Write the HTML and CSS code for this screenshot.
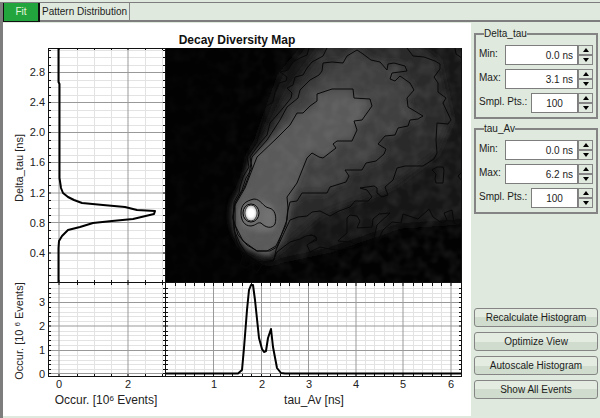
FILE: index.html
```html
<!DOCTYPE html>
<html lang="en">
<head>
<meta charset="utf-8">
<title>Decay Diversity Map</title>
<link rel="stylesheet" href="styles.css">
</head>
<body>
<div class="window">
  <nav class="tabs">
    <button class="tab tab-active" type="button">Fit</button>
    <button class="tab" type="button">Pattern Distribution</button>
  </nav>
  <div class="content">
    <main class="plot">
      <svg class="chart" viewBox="3 23 468 393" role="img" aria-label="Decay Diversity Map">
        <defs>
          <filter id="soft" x="-10%" y="-10%" width="120%" height="120%"><feGaussianBlur stdDeviation="4"/></filter>
          <filter id="softer" x="-20%" y="-20%" width="140%" height="140%"><feGaussianBlur stdDeviation="2"/></filter>
          <filter id="glow" x="-50%" y="-50%" width="200%" height="200%"><feGaussianBlur stdDeviation="1"/></filter>
          <filter id="mottle" x="0" y="0" width="100%" height="100%">
            <feTurbulence type="fractalNoise" baseFrequency="0.08" numOctaves="2" seed="4"/>
            <feColorMatrix values="0 0 0 0 1  0 0 0 0 1  0 0 0 0 1  0.5 0 0 0 -0.18"/>
          </filter>
          <linearGradient id="fade" x1="0" y1="0" x2="1" y2="0">
            <stop offset="0.15" stop-color="#fff" stop-opacity="0.1"/><stop offset="0.5" stop-color="#fff" stop-opacity="0.25"/><stop offset="1" stop-color="#fff" stop-opacity="0.35"/>
          </linearGradient>
          <mask id="noiseMask"><rect x="165" y="48" width="297" height="235" fill="url(#fade)"/></mask>
          <clipPath id="mapClip"><rect x="165" y="48" width="297" height="235"/></clipPath>
          <clipPath id="tickClip">
            <path d="M48 48h117v2h-117zM48 48h3v328h-3zM163 48h5v328h-5zM48 280h117v5h-117zM165 283h297v3h-297zM48 374h414v3h-414zM459 283h3v94h-3z"/>
          </clipPath>
          <path id="minor" d="M77.500 48V376M94.500 48V376M111.500 48V376M145.500 48V376M162.500 48V376
            M48 50.500H165M48 57.500H165M48 65.500H165M48 80.500H165M48 87.500H165M48 95.500H165M48 110.500H165M48 117.500H165M48 125.500H165M48 140.500H165M48 148.500H165M48 155.500H165M48 170.500H165M48 178.500H165M48 185.500H165M48 200.500H165M48 208.500H165M48 215.500H165M48 230.500H165M48 238.500H165M48 245.500H165M48 260.500H165M48 268.500H165M48 275.500H165
            M48 288.500H461M48 293.500H461M48 297.500H461M48 307.500H461M48 312.500H461M48 316.500H461M48 321.500H461M48 331.500H461M48 335.500H461M48 340.500H461M48 345.500H461M48 355.500H461M48 360.500H461M48 364.500H461M48 369.500H461
            M175.500 283V376M185.500 283V376M194.500 283V376M204.500 283V376M223.500 283V376M232.500 283V376M242.500 283V376M251.500 283V376M270.500 283V376M280.500 283V376M289.500 283V376M299.500 283V376M318.500 283V376M327.500 283V376M337.500 283V376M346.500 283V376M365.500 283V376M374.500 283V376M384.500 283V376M393.500 283V376M413.500 283V376M422.500 283V376M432.500 283V376M441.500 283V376"/>
          <path id="major" d="M59 48V376M128 48V376M48 72.500H165M48 102.500H165M48 132.500H165M48 162.500H165M48 193H165M48 222.500H165M48 253H165
            M48 302.500H461M48 326H461M48 350.500H461M48 373.500H461M213.500 283V376M261.500 283V376M308.500 283V376M356 283V376M403 283V376M451 283V376"/>
          <path id="cA" d="M309 48L307 55 300 58 293 62 288 70 280 72 287 77 286 81 279 83 275 92 273 102 265 107 263 120 260 130 257 142 247 157 249 167 243 177 240 187 239 193 234 202 233 217 234 230 237 242 243 257 240 265 246 268 253 263 253 270 257 273 263 263 273 261 277 252 290 242 300 239 306 236 312 235 317 238 307 245 310 252 320 247 335 250 353 247 355 244 351 242 338 241 341 238 347 233 347 218 350 215 357 216 360 221 357 228 372 227 373 219 379 214 390 213 377 225 374 238 378 240 383 230 392 222 401 223 403 214 418 219 429 209 433 217 442 223 447 220 444 213 452 210 454 223 458 225 462 223"/>
          <path id="cB" d="M327 48L323 56 312 62 307 68 303 75 295 77 293 85 287 88 292 93 291 98 283 108 277 115 270 123 267 135 260 143 250 157 252 168 246 178 242 190 235 203 233 217 235 232 240 244 248 256 252 260 262 262 274 260 276 250 283 235 290 220 298 217 307 216 312 212 320 211 330 216 339 211 350 207 355 201 368 201 372 197 367 190 360 188 374 186 377 188 377 193 382 197 388 195 385 187 393 180 397 168 405 166 423 166 434 159 437 153 436 140 437 123 448 124 451 120 443 103 446 98 438 92 438 83 434 77 440 69 440 64 435 61 424 57 413 56 407 48"/>
          <path id="cC" d="M319 75L322 71 323 63 332 62 343 63 347 56 357 50 363 54 371 60 380 62 387 70 388 64 394 63 405 66 407 71 392 73 390 79 395 81 400 76 410 83 414 90 407 98 408 107 423 116 418 119 410 120 408 126 398 128 395 135 385 136 378 144 386 149 384 154 376 161 366 163 362 170 345 170 349 176 346 182 330 187 327 193 302 193 297 201 290 202 288 210 287 220 282 233 277 247 270 251 257 251 247 245 238 235 233 218 235 203 244 188 249 175 252 157 267 140 280 120 287 107 298 98 300 90 310 80Z"/>
          <path id="cD" d="M317 101L317 94 332 89 353 89 354 98 370 99 372 106 362 120 354 121 357 130 352 141 337 141 333 144 336 148 323 158 319 157 312 153 307 158 297 183 287 197 288 208 286 225 276 246 267 251 257 251 243 241 235 225 235 205 245 188 257 157 277 138 290 125 297 113 303 113 310 106Z"/>
          <path id="cE" d="M241 213C241 205 245 201 254 199C261 199 263 207 269 208C275 209 277 217 275 224C272 229 266 228 261 223C257 222 257 225 251 226C244 226 241 220 241 213Z"/>
        </defs>

        <use href="#minor" class="grid-minor"/>
        <use href="#major" class="grid-major"/>
        <g clip-path="url(#tickClip)"><use href="#minor" class="tick"/><use href="#major" class="tick"/></g>

        <g clip-path="url(#mapClip)">
          <rect x="165" y="48" width="297" height="235" fill="#020202"/>
          <g filter="url(#soft)">
            <path d="M309 40L280 75 262 125 240 190 240 240 265 264 330 250 400 226 475 221V40Z" fill="#151515"/>
            <path d="M327 40L290 90 267 135 245 190 241 244 270 258 320 215 395 185 437 153 451 120 438 60 410 40Z" fill="#2a2a2a"/>
            <use href="#cC" fill="#404040"/>
          </g>
          <g filter="url(#softer)">
            <path d="M252 157L244 188 236 203 235 232 247 249 270 255 287 225 289 202 307 158 295 118Z" fill="#555"/>
          </g>
          <g filter="url(#soft)"><use href="#cD" fill="#5a5a5a"/></g>
          <g filter="url(#softer)"><path d="M239 210Q250 194 270 203Q281 218 273 231Q250 234 240 224Z" fill="#6c6c6c"/></g>
          <rect x="165" y="48" width="297" height="235" filter="url(#mottle)" mask="url(#noiseMask)"/>
          <g class="contour">
            <use href="#cA"/><use href="#cB"/><use href="#cC"/><use href="#cD"/><use href="#cE"/>
            <path d="M432 170L437 167 443 167 444 170 443 183 436 183 435 179 436 174ZM455 48L456 54 462 58M462 172L458 176 462 181M310 235L315 236 317 240 310 243"/>
          </g>
          <ellipse cx="251" cy="213" rx="8" ry="9" fill="#8a8a8a" stroke="#000"/>
          <ellipse cx="251" cy="213" rx="6" ry="8" fill="#bbb" stroke="#222"/>
          <ellipse cx="251" cy="213" rx="5" ry="6" fill="#fff" filter="url(#glow)"/>
        </g>

        <path class="axis" d="M48 48.500H165M48.500 48V377M48 282.500H462M165.500 48V377M48 376.500H462M461.500 48V377"/>
        <path class="curve" d="M58.500 48V82L59.500 84V178L61 188 63 193 68 197 74 200 82 203 103 205 125 207 137 210 155 211 154 214 133 219 112 221 93 223 80 227 68 230 62 236 59 241 58.500 248V282"/>
        <path class="curve" d="M166 373.500H238L242 370 244 348 247 310 249 290 251 285H253L255 300 259 338 262 349 264 352 266 351 268 338 271 329 273 347 277 368 281 373 285 373.500H461"/>

        <text class="title" x="237" y="44">Decay Diversity Map</text>
        <g class="label end">
          <text x="45" y="76">2.8</text><text x="45" y="106">2.4</text><text x="45" y="136">2.0</text><text x="45" y="166">1.6</text><text x="45" y="197">1.2</text><text x="45" y="227">0.8</text><text x="45" y="257">0.4</text>
          <text x="45" y="306">3</text><text x="45" y="330">2</text><text x="45" y="354">1</text><text x="45" y="378">0</text>
        </g>
        <g class="label middle">
          <text x="59" y="388">0</text><text x="128" y="388">2</text><text x="214" y="388">1</text><text x="262" y="388">2</text><text x="309" y="388">3</text><text x="356" y="388">4</text><text x="403" y="388">5</text><text x="451" y="388">6</text>
          <text class="axis-name" x="106" y="404">Occur. [10<tspan class="sup" dy="-3">6</tspan><tspan dy="3"> Events]</tspan></text>
          <text class="axis-name" x="314" y="404">tau_Av [ns]</text>
          <text transform="translate(23 168) rotate(-90)">Delta_tau [ns]</text>
          <text transform="translate(23 331) rotate(-90)">Occur. [10 <tspan class="sup" dy="-3">6</tspan><tspan dy="3"> Events]</tspan></text>
        </g>
      </svg>
    </main>
    <aside class="panel">
      <fieldset class="group">
        <legend>Delta_tau</legend>
        <div class="row"><label for="d-min">Min:</label><input id="d-min" type="text" value="0.0 ns"><span class="spin"><button type="button" aria-label="Increase"><svg viewBox="0 0 6 4"><path d="M0 4L3 0 6 4Z"/></svg></button><button type="button" aria-label="Decrease"><svg viewBox="0 0 6 4"><path d="M0 0L3 4 6 0Z"/></svg></button></span></div>
        <div class="row"><label for="d-max">Max:</label><input id="d-max" type="text" value="3.1 ns"><span class="spin"><button type="button" aria-label="Increase"><svg viewBox="0 0 6 4"><path d="M0 4L3 0 6 4Z"/></svg></button><button type="button" aria-label="Decrease"><svg viewBox="0 0 6 4"><path d="M0 0L3 4 6 0Z"/></svg></button></span></div>
        <div class="row row-points"><label for="d-pts">Smpl. Pts.:</label><input id="d-pts" type="text" value="100"><span class="spin"><button type="button" aria-label="Increase"><svg viewBox="0 0 6 4"><path d="M0 4L3 0 6 4Z"/></svg></button><button type="button" aria-label="Decrease"><svg viewBox="0 0 6 4"><path d="M0 0L3 4 6 0Z"/></svg></button></span></div>
      </fieldset>
      <fieldset class="group">
        <legend>tau_Av</legend>
        <div class="row"><label for="t-min">Min:</label><input id="t-min" type="text" value="0.0 ns"><span class="spin"><button type="button" aria-label="Increase"><svg viewBox="0 0 6 4"><path d="M0 4L3 0 6 4Z"/></svg></button><button type="button" aria-label="Decrease"><svg viewBox="0 0 6 4"><path d="M0 0L3 4 6 0Z"/></svg></button></span></div>
        <div class="row"><label for="t-max">Max:</label><input id="t-max" type="text" value="6.2 ns"><span class="spin"><button type="button" aria-label="Increase"><svg viewBox="0 0 6 4"><path d="M0 4L3 0 6 4Z"/></svg></button><button type="button" aria-label="Decrease"><svg viewBox="0 0 6 4"><path d="M0 0L3 4 6 0Z"/></svg></button></span></div>
        <div class="row row-points"><label for="t-pts">Smpl. Pts.:</label><input id="t-pts" type="text" value="100"><span class="spin"><button type="button" aria-label="Increase"><svg viewBox="0 0 6 4"><path d="M0 4L3 0 6 4Z"/></svg></button><button type="button" aria-label="Decrease"><svg viewBox="0 0 6 4"><path d="M0 0L3 4 6 0Z"/></svg></button></span></div>
      </fieldset>
      <div class="actions">
        <button type="button">Recalculate Histogram</button>
        <button type="button">Optimize View</button>
        <button type="button">Autoscale Histogram</button>
        <button type="button">Show All Events</button>
      </div>
    </aside>
  </div>
</div>
</body>
</html>
```

FILE: styles.css
```css
* { box-sizing: border-box; }

body {
  margin: 0;
  padding-top: 2px;
  background: #dfe9dd;
  color: #1c1c1c;
  font-family: "Liberation Sans", Arial, sans-serif;
  font-size: 10px;
}

button, input { font: inherit; color: inherit; margin: 0; }

.window {
  display: flex;
  flex-direction: column;
  min-height: calc(100vh - 2px);
  border-top: 1px solid #7d7d7d;
  border-left: 3px solid #7d7d7d;
}

.tabs {
  display: flex;
  height: 19px;
  border-bottom: 2px solid #7d7d7d;
}

.tab {
  height: 17px;
  padding: 0 2px;
  border: 0;
  border-right: 1px solid #888;
  background: #dfe9dd;
  line-height: 16px;
}

.tab-active {
  height: 19px;
  width: 37px;
  background: #22a53d;
  color: #e6f5dc;
  border: solid #111;
  border-width: 0 2px 1px 1px;
}

.content { display: flex; flex: 1; padding-top: 1px; }

.plot { flex: 1; min-width: 0; }

.chart { display: block; width: 100%; height: auto; background: #fff; }

.grid-minor, .grid-major, .tick, .axis, .curve, .contour { fill: none; }
.grid-minor { stroke: #e3e3e3; }
.grid-major { stroke: #999; }
.tick, .axis { stroke: #111; }
.curve { stroke: #000; stroke-width: 2; stroke-linejoin: round; }
.contour { stroke: #080808; stroke-linejoin: round; }

.title { font-size: 12px; font-weight: bold; text-anchor: middle; fill: #111; }
.label { font-size: 11px; fill: #222; }
.axis-name { font-size: 12px; }
.end { text-anchor: end; }
.middle { text-anchor: middle; }
.sup { font-size: 8px; }

.panel {
  display: flex;
  flex-direction: column;
  flex: 0 0 129px;
  min-width: 0;
  padding: 5px 2px 19px 3px;
  gap: 4px;
}

.group {
  min-width: 0;
  margin: 0;
  padding: 5px 3px 4px;
  border: 2px solid #848484;
}

.group legend { margin-left: 5px; padding: 0; line-height: 12px; }

.row { display: flex; height: 20px; margin-bottom: 4px; }
.row-points { margin-bottom: 0; }
.row label { width: 26px; line-height: 18px; white-space: nowrap; }
.row-points label { width: 52px; }

.row input {
  flex: 1;
  width: 0;
  min-width: 0;
  padding: 0 4px;
  border: 1px solid #7d7d7d;
  background: #fff;
  text-align: right;
}
.row-points input { text-align: center; }

.spin { display: flex; flex-direction: column; width: 15px; }
.spin button {
  display: flex;
  flex: 1;
  align-items: center;
  justify-content: center;
  padding: 0;
  border: 1px solid #858585;
  background: #dfe9dd;
}
.spin svg { display: block; width: 6px; height: 4px; }

.actions { display: flex; flex-direction: column; gap: 5px; margin-top: auto; }
.actions button {
  height: 19px;
  padding: 0;
  border: 1px solid #858585;
  border-radius: 3px;
  background: linear-gradient(#e4ece1 50%, #d0dccd 50%);
}
```
